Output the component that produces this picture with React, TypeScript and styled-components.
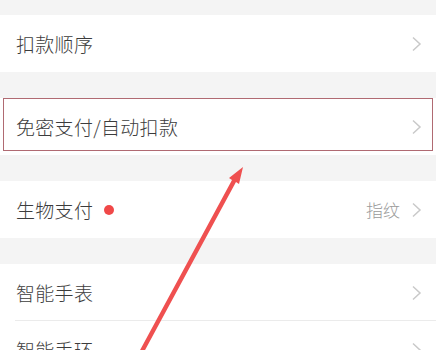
import React from "react";
import styled, { createGlobalStyle } from "styled-components";

const Global = createGlobalStyle`
  html, body { margin: 0; padding: 0; background: #f4f4f4; }
  body { font-family: "Noto Sans CJK SC", "Noto Sans", sans-serif; }
`;

const Page = styled.div`
  position: relative;
  width: 436px;
  height: 350px;
  overflow: hidden;
  background: #f4f4f4;
  padding-top: 15px;
  box-sizing: border-box;
  display: flex;
  flex-direction: column;
`;

const Group = styled.div`
  background: #fff;
  margin-bottom: 26px;
  display: flex;
  flex-direction: column;
`;

const Row = styled.div<{ $divider?: boolean }>`
  height: 57px;
  display: flex;
  align-items: center;
  padding: 0 14px 0 16px;
  position: relative;
  box-sizing: border-box;
  ${(p) =>
    p.$divider
      ? `&::after { content: ""; position: absolute; left: 15px; right: 0; bottom: 0; height: 1px; background: #ebebeb; }`
      : ""}
`;

const Label = styled.span`
  font-size: 19px;
  font-weight: 300;
  color: #3c3c3c;
  letter-spacing: 0.3px;
`;

const Dot = styled.span`
  width: 10px;
  height: 10px;
  border-radius: 50%;
  background: #f04848;
  margin-left: 11px;
`;

const Spacer = styled.div`
  flex: 1;
`;

const Value = styled.span`
  font-size: 17px;
  font-weight: 300;
  color: #9a9a9a;
  margin-right: 11px;
`;

const Highlight = styled.div`
  position: absolute;
  left: 3px;
  top: 98px;
  width: 430px;
  height: 53px;
  border: 1px solid #b06a72;
  box-sizing: border-box;
  pointer-events: none;
`;

const ArrowSvg = styled.svg`
  position: absolute;
  left: 0;
  top: 0;
  pointer-events: none;
`;

const Chevron = () => (
  <svg width="11" height="16" viewBox="0 0 11 16">
    <path d="M2 1.5 L9 8 L2 14.5" fill="none" stroke="#c9c9c9" strokeWidth="1.5" />
  </svg>
);

export default function App() {
  return (
    <>
      <Global />
      <Page>
        <Group>
          <Row>
            <Label>扣款顺序</Label>
            <Spacer />
            <Chevron />
          </Row>
        </Group>
        <Group>
          <Row>
            <Label>免密支付/自动扣款</Label>
            <Spacer />
            <Chevron />
          </Row>
        </Group>
        <Group>
          <Row>
            <Label>生物支付</Label>
            <Dot />
            <Spacer />
            <Value>指纹</Value>
            <Chevron />
          </Row>
        </Group>
        <Group>
          <Row $divider>
            <Label>智能手表</Label>
            <Spacer />
            <Chevron />
          </Row>
          <Row>
            <Label>智能手环</Label>
            <Spacer />
            <Chevron />
          </Row>
        </Group>
        <Highlight />
        <ArrowSvg width="436" height="350" viewBox="0 0 436 350">
          <polygon
            points="139,352 144,352 236,182 239,184 243,167 229,178 232,180"
            fill="#ef5050"
          />
        </ArrowSvg>
      </Page>
    </>
  );
}
